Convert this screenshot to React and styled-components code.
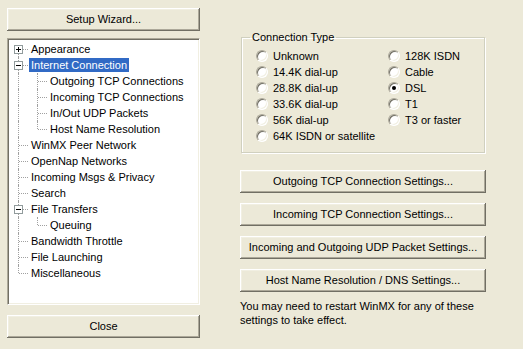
import React from 'react';
import styled, { createGlobalStyle, css } from 'styled-components';

const GlobalStyle = createGlobalStyle`
	html, body {
		margin: 0;
		padding: 0;
		background: #ece9d8;
	}
	body {
		width: 523px;
		height: 349px;
		overflow: hidden;
		font-family: 'Liberation Sans', Arial, sans-serif;
		font-size: 11px;
		color: #000;
	}
`;

const Window = styled.div`
	display: flex;
	box-sizing: border-box;
	width: 523px;
	height: 349px;
	padding: 8px 0 0 7px;
`;

const LeftColumn = styled.div`
	display: flex;
	flex-direction: column;
	width: 193px;
`;

const RightColumn = styled.div`
	display: flex;
	flex-direction: column;
	width: 246px;
	margin-left: 40px;
	padding-top: 23px;
`;

const Button = styled.button`
	display: flex;
	align-items: center;
	justify-content: center;
	box-sizing: border-box;
	width: 100%;
	height: 23px;
	margin: 0;
	padding: 0 0 1px;
	border: none;
	background: #ece9d8;
	font-family: inherit;
	font-size: 11px;
	color: #000;
	box-shadow: inset -1px -1px #716f64, inset 1px 1px #fff, inset -2px -2px #aca899,
		inset 2px 2px #f1efe2;
	${(p) =>
		p.$gap &&
		css`
			margin-top: ${p.$gap}px;
		`}
`;

const Tree = styled.div`
	box-sizing: border-box;
	height: 267px;
	margin-top: 7px;
	background: #fff;
	border: 1px solid;
	border-color: #aca899 #fff #fff #aca899;
	box-shadow: inset 1px 1px #716f64, inset -1px -1px #f1efe2;
	padding: 2px 0 0 1px;
`;

const Row = styled.div`
	display: flex;
	align-items: center;
	height: 16px;
`;

const lineColor = '#a0a0a0';

const Guide = styled.div`
	position: relative;
	flex: none;
	display: flex;
	align-items: center;
	width: 19px;
	height: 16px;
	padding-left: 5px;
	box-sizing: border-box;

	&::before {
		content: '';
		display: ${(p) => (p.$vertical ? 'block' : 'none')};
		position: absolute;
		left: 9px;
		top: ${(p) => (p.$from === 'mid' ? '8px' : '0')};
		bottom: ${(p) => (p.$to === 'mid' ? '8px' : '0')};
		border-left: 1px dotted ${lineColor};
	}

	&::after {
		content: '';
		display: ${(p) => (p.$branch ? 'block' : 'none')};
		position: absolute;
		left: 10px;
		top: 8px;
		width: 9px;
		border-top: 1px dotted ${lineColor};
	}
`;

const ExpanderBox = styled.svg`
	position: relative;
	z-index: 1;
	display: block;
	margin-top: 1px;
`;

const Label = styled.span`
	margin-left: 1px;
	padding: 0 2px;
	line-height: 14px;
	white-space: nowrap;
	${(p) =>
		p.$selected &&
		css`
			background: #316ac5;
			color: #fff;
		`}
`;

const Expander = ({ open }) => (
	<ExpanderBox width="9" height="9" viewBox="0 0 9 9">
		<rect x="0.5" y="0.5" width="8" height="8" fill="#fff" stroke="#919b9c" />
		<path d="M2 4.5h5" stroke="#000" />
		{!open && <path d="M4.5 2v5" stroke="#000" />}
	</ExpanderBox>
);

const tree = [
	{ label: 'Appearance', expander: 'closed' },
	{
		label: 'Internet Connection',
		expander: 'open',
		selected: true,
		children: [
			'Outgoing TCP Connections',
			'Incoming TCP Connections',
			'In/Out UDP Packets',
			'Host Name Resolution',
		],
	},
	{ label: 'WinMX Peer Network' },
	{ label: 'OpenNap Networks' },
	{ label: 'Incoming Msgs & Privacy' },
	{ label: 'Search' },
	{ label: 'File Transfers', expander: 'open', children: ['Queuing'] },
	{ label: 'Bandwidth Throttle' },
	{ label: 'File Launching' },
	{ label: 'Miscellaneous' },
];

const TreeView = () => (
	<Tree>
		{tree.map((node, i) => {
			const first = i === 0;
			const last = i === tree.length - 1;
			return (
				<React.Fragment key={node.label}>
					<Row>
						<Guide $vertical $branch $from={first ? 'mid' : 'top'} $to={last ? 'mid' : 'bottom'}>
							{node.expander && <Expander open={node.expander === 'open'} />}
						</Guide>
						<Label $selected={node.selected}>{node.label}</Label>
					</Row>
					{(node.children || []).map((child, j) => (
						<Row key={child}>
							<Guide $vertical={!last} />
							<Guide
								$vertical
								$branch
								$from="top"
								$to={j === node.children.length - 1 ? 'mid' : 'bottom'}
							/>
							<Label>{child}</Label>
						</Row>
					))}
				</React.Fragment>
			);
		})}
	</Tree>
);

const GroupBox = styled.fieldset`
	box-sizing: border-box;
	width: 244px;
	margin: 0 0 0 1px;
	padding: 4px 0 8px 14px;
	border: 1px solid #d0d0bf;
	box-shadow: inset 1px 1px #fff, 1px 1px #fff;
	border-radius: 0;
`;

const Legend = styled.legend`
	margin-left: -6px;
	padding: 0 2px;
	line-height: 13px;
`;

const RadioGrid = styled.div`
	display: grid;
	grid-template-columns: 132px 1fr;
	grid-auto-flow: column;
	grid-template-rows: repeat(6, 16px);
`;

const RadioItem = styled.label`
	display: flex;
	align-items: center;
	gap: 5px;
	white-space: nowrap;
`;

const RadioCircle = styled.span`
	position: relative;
	box-sizing: border-box;
	flex: none;
	width: 12px;
	height: 12px;
	border-radius: 50%;
	background: #fff;
	border: 1px solid;
	border-color: #aca899 #fff #fff #aca899;
	box-shadow: inset 1px 1px #716f64, inset -1px -1px #f1efe2;

	${(p) =>
		p.$checked &&
		css`
			&::after {
				content: '';
				position: absolute;
				left: 3px;
				top: 3px;
				width: 4px;
				height: 4px;
				border-radius: 50%;
				background: #000;
			}
		`}
`;

const Radio = ({ label, checked }) => (
	<RadioItem>
		<RadioCircle $checked={checked} />
		{label}
	</RadioItem>
);

const leftTypes = ['Unknown', '14.4K dial-up', '28.8K dial-up', '33.6K dial-up', '56K dial-up', '64K ISDN or satellite'];
const rightTypes = ['128K ISDN', 'Cable', 'DSL', 'T1', 'T3 or faster'];

const Note = styled.p`
	margin: 7px 0 0;
	line-height: 14px;
`;

const settingsButtons = [
	'Outgoing TCP Connection Settings...',
	'Incoming TCP Connection Settings...',
	'Incoming and Outgoing UDP Packet Settings...',
	'Host Name Resolution / DNS Settings...',
];

const App = () => (
	<>
		<GlobalStyle />
		<Window>
			<LeftColumn>
				<Button>Setup Wizard...</Button>
				<TreeView />
				<Button $gap={10}>Close</Button>
			</LeftColumn>
			<RightColumn>
				<GroupBox>
					<Legend>Connection Type</Legend>
					<RadioGrid>
						{leftTypes.map((t) => (
							<Radio key={t} label={t} />
						))}
						{rightTypes.map((t) => (
							<Radio key={t} label={t} checked={t === 'DSL'} />
						))}
					</RadioGrid>
				</GroupBox>
				{settingsButtons.map((b, i) => (
					<Button key={b} $gap={i === 0 ? 17 : 10}>
						{b}
					</Button>
				))}
				<Note>
					You may need to restart WinMX for any of these
					<br />
					settings to take effect.
				</Note>
			</RightColumn>
		</Window>
	</>
);

export default App;
